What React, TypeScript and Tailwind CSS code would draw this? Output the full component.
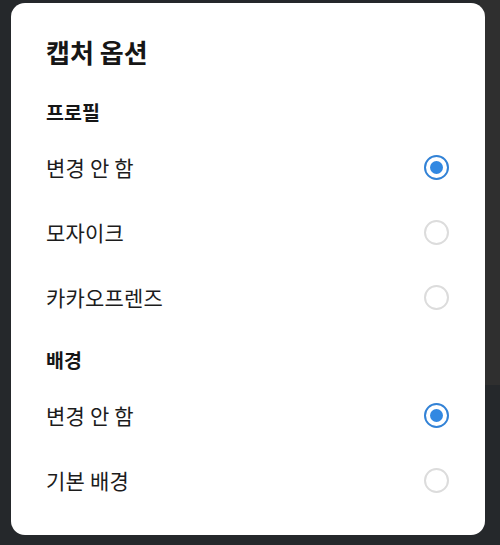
import React from "react";

const font = { fontFamily: '"Noto Sans CJK KR", "Noto Sans", sans-serif' };

function Radio({ checked }: { checked: boolean }) {
  return checked ? (
    <div className="w-[25px] h-[25px] rounded-full border-[2.5px] border-[#3282d6] flex items-center justify-center">
      <div className="w-[13px] h-[13px] rounded-full bg-[#3188e2]" />
    </div>
  ) : (
    <div className="w-[25px] h-[25px] rounded-full border-2 border-[#dcdcdc]" />
  );
}

function Row({ label, checked }: { label: string; checked: boolean }) {
  return (
    <div className="h-[65px] flex items-center justify-between">
      <span className="text-[21px] text-[#1c1c1c] leading-none tracking-[0.2px]">{label}</span>
      <Radio checked={checked} />
    </div>
  );
}

export default function App() {
  return (
    <div
      className="w-[500px] h-[545px] bg-[#25282b] relative overflow-hidden"
      style={font}
    >
      <div className="absolute right-0 top-0 w-[20px] h-[385px] bg-[#2f2f2f]" />
      <div className="absolute left-[11px] top-[3px] w-[474px] h-[532px] bg-white rounded-[14px] pl-[35px] pr-[36px]">
        <div className="pt-[29px] h-[69px] flex items-end">
          <div className="h-[40px] flex items-center text-[26px] font-bold text-[#161616] leading-none">
            캡처 옵션
          </div>
        </div>
        <div className="h-[62.5px] flex items-end pb-[12.5px]">
          <div className="h-[20px] flex items-center text-[19.5px] font-bold text-[#161616] leading-none">
            프로필
          </div>
        </div>
        <Row label="변경 안 함" checked />
        <Row label="모자이크" checked={false} />
        <Row label="카카오프렌즈" checked={false} />
        <div className="h-[53px] flex items-end pb-[12.5px]">
          <div className="h-[20px] flex items-center text-[19.5px] font-bold text-[#161616] leading-none">
            배경
          </div>
        </div>
        <Row label="변경 안 함" checked />
        <Row label="기본 배경" checked={false} />
      </div>
    </div>
  );
}
